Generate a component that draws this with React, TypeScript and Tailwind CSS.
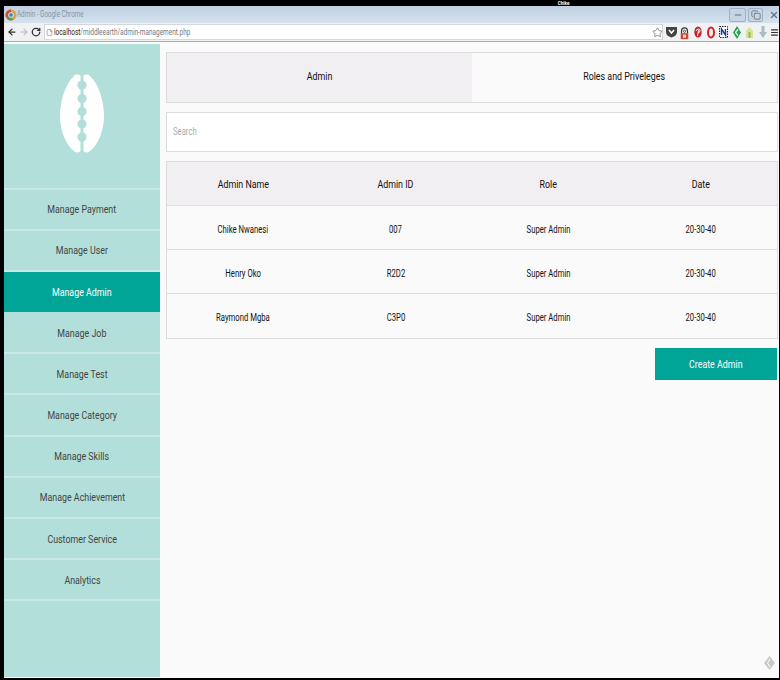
import React from 'react';
import { ArrowLeft, ArrowRight, RotateCw, Star, File, Minus, X, Copy, Menu } from 'lucide-react';

const navItems = [
    'Manage Payment',
    'Manage User',
    'Manage Admin',
    'Manage Job',
    'Manage Test',
    'Manage Category',
    'Manage Skills',
    'Manage Achievement',
    'Customer Service',
    'Analytics',
];

const admins = [
    { name: 'Chike Nwanesi', id: '007', role: 'Super Admin', date: '20-30-40' },
    { name: 'Henry Oko', id: 'R2D2', role: 'Super Admin', date: '20-30-40' },
    { name: 'Raymond Mgba', id: 'C3P0', role: 'Super Admin', date: '20-30-40' },
];

// The screenshot was squashed sideways, so the text is too
const Squeezed: React.FC<{ children: React.ReactNode }> = ({ children }) => (
    <span className="inline-block whitespace-nowrap scale-x-[0.77]">{children}</span>
);

// Shell logo from the sidebar
const Logo = () => (
    <svg width="44" height="80" viewBox="0 0 44 80">
        <path
            d="M22 3 C20 0 16 0 14 2 C5 10 0 28 0 42 C0 58 7 72 14 77 C17 79.500 20 79 22 75 C24 79 27 79.500 30 77 C37 72 44 58 44 42 C44 28 39 10 30 2 C28 0 24 0 22 3 Z"
            fill="#ffffff"
        />
        <path d="M22 0V78" stroke="#b2dfd9" strokeWidth="3" />
        <circle cx="22" cy="11" r="4.600" fill="#b2dfd9" />
        <circle cx="22" cy="24.500" r="4.600" fill="#b2dfd9" />
        <circle cx="22" cy="37.500" r="4.600" fill="#b2dfd9" />
        <circle cx="22" cy="50" r="4.600" fill="#b2dfd9" />
        <circle cx="22" cy="63" r="4.600" fill="#b2dfd9" />
    </svg>
);

const ChromeLogo = () => (
    <svg width="12" height="12" viewBox="0 0 12 12">
        <circle cx="6" cy="6" r="5.500" fill="#d9a441" />
        <path d="M6 .5A5.500 5.500 0 0 0 1.200 8.700L6 6Z" fill="#c9503c" />
        <path d="M1.200 8.700A5.500 5.500 0 0 0 8 11L6 6Z" fill="#5a9a58" />
        <circle cx="6" cy="6" r="2.400" fill="#4d7fb8" stroke="#e8eef4" />
    </svg>
);

const ExtensionIcons = () => (
    <div className="flex items-center">
        <div className="w-[13px] flex justify-center">
            <svg width="11" height="12" viewBox="0 0 11 12">
                <path d="M0 1h11v5q0 4-5.500 5.500Q0 10 0 6Z" fill="#444" />
                <path d="M3 4l2.500 3L8 4" fill="none" stroke="#fff" strokeWidth="1.500" />
            </svg>
        </div>
        <div className="w-[13px] flex justify-center">
            <svg width="9" height="17" viewBox="0 0 12 17" className="mt-[2px]">
                <path d="M2 8V5a4 4 0 0 1 8 0v3" fill="none" stroke="#333" strokeWidth="1.500" />
                <circle cx="6" cy="5.500" r="1.500" fill="none" stroke="#333" />
                <rect x="1" y="8" width="10" height="8" fill="#d3452f" />
                <rect x="4" y="10" width="4" height="4" fill="#f5d9d3" />
            </svg>
        </div>
        <div className="w-[13px] flex justify-center">
            <svg width="8" height="12" viewBox="0 0 8 12">
                <ellipse cx="4" cy="6" rx="3.700" ry="5.500" fill="#c9202c" />
                <path d="M3.500 10l1-6M2 5Q2.500 3 4.500 3T6 5 4 7" fill="none" stroke="#fff" />
            </svg>
        </div>
        <div className="w-[13px] flex justify-center">
            <svg width="8" height="13" viewBox="0 0 8 13">
                <ellipse cx="4" cy="6.500" rx="3" ry="5" fill="none" stroke="#d81f26" strokeWidth="2" />
            </svg>
        </div>
        <div className="w-[13px] flex justify-center">
            <svg width="9" height="13" viewBox="0 0 9 13">
                <rect x="0.500" y="0.500" width="8" height="11" fill="#fff" stroke="#222" strokeDasharray="1.500 1" />
                <path d="M2.500 9V3l4 6V3" fill="none" stroke="#1c3f94" strokeWidth="1.500" />
            </svg>
        </div>
        <div className="w-[13px] flex justify-center">
            <svg width="8" height="13" viewBox="0 0 8 13">
                <path d="M4 0L8 6.500 4 13 0 6.500Z" fill="#1da650" />
                <path d="M5 3.500L2.500 6.500 5 9.500" fill="none" stroke="#fff" strokeWidth="1.200" />
            </svg>
        </div>
        <div className="w-[13px] flex justify-center">
            <svg width="7" height="11" viewBox="0 0 7 11">
                <path d="M0 11V4l3.500-4L7 4v7Z" fill="#d6e58f" />
                <rect x="2.500" y="5" width="2" height="6" fill="#9ab855" />
            </svg>
        </div>
        <div className="w-[13px] flex justify-center">
            <svg width="8" height="12" viewBox="0 0 8 12">
                <path d="M2.500 0h3v6H8l-4 6-4-6h2.500Z" fill="#a9bcc8" />
            </svg>
        </div>
    </div>
);

const App: React.FC = () => {
    return (
        <div className="w-[780px] h-[680px] bg-black pl-[4px] pr-[1px] pb-[2px] flex flex-col overflow-hidden font-['Roboto',sans-serif]">
            <div className="h-[6px] shrink-0 pl-[552px] flex items-center text-[6px] leading-none font-bold text-white">
                <Squeezed>Chike</Squeezed>
            </div>
            <div className="relative h-[17px] shrink-0 bg-gradient-to-b from-[#bfd0e2] to-[#d5e2ee] flex items-center pl-[1px]">
                <ChromeLogo />
                <span className="text-[8.2px] text-[#8a949e] whitespace-nowrap origin-left scale-x-[0.77]">Admin - Google Chrome</span>
                <div className="absolute right-[0px] top-[2px] flex gap-[2px]">
                    <div className="w-[17px] h-[14px] rounded-[2px] border border-[#9fb2c6] bg-[#c6d5e4] flex items-center justify-center">
                        <Minus size={10} color="#66727f" strokeWidth={2.5} />
                    </div>
                    <div className="w-[15px] h-[14px] rounded-[2px] border border-[#9fb2c6] bg-[#c6d5e4] flex items-center justify-center">
                        <Copy size={10} color="#66727f" strokeWidth={2} />
                    </div>
                    <div className="ml-[4px] w-[10px] h-[14px] flex items-center justify-center">
                        <X size={10} color="#66727f" strokeWidth={3} />
                    </div>
                </div>
            </div>
            <div className="h-[19px] shrink-0 bg-[#f0f1f3] flex items-center border-b border-[#a8acb0]">
                <div className="w-[40px] flex items-center gap-[2px] pl-[3px]">
                    <ArrowLeft size={10} color="#333" strokeWidth={3} />
                    <ArrowRight size={10} color="#b5b8bb" strokeWidth={2.5} />
                    <RotateCw size={10} color="#333" strokeWidth={3} />
                </div>
                <div className="w-[620px] h-[16px] bg-white border border-[#d5d7da] flex items-center gap-[1px] pl-[1px] text-[8.4px]">
                    <File size={7} color="#777" />
                    <span className="whitespace-nowrap origin-left scale-x-[0.77]">
                        <span className="text-[#222]">localhost</span>
                        <span className="text-[#777]">/middleearth/admin-management.php</span>
                    </span>
                    <Star size={11} color="#888" className="ml-auto mr-[-1px]" />
                </div>
                <div className="ml-[2px]">
                    <ExtensionIcons />
                </div>
                <Menu size={9} color="#333" strokeWidth={3} className="ml-[1px]" />
            </div>
            <div className="h-[2px] shrink-0 bg-[#fafafa]" />
            <div className="flex-1 flex min-h-0 relative bg-[#fafafa]">
                <aside className="w-[156px] shrink-0 mb-[1px] bg-[#b2dfd9] flex flex-col">
                    <div className="h-[145.5px] shrink-0 border-b-2 border-[#c7e8e3] flex items-center justify-center pb-[3px]">
                        <Logo />
                    </div>
                    {navItems.map(item => (
                        <div
                            key={item}
                            className={
                                item === 'Manage Admin'
                                    ? 'h-[41.2px] shrink-0 pt-[1.3px] flex items-center justify-center bg-[#00a598] bg-clip-padding border-b border-[#b2dfd9] text-white text-[11.5px]'
                                    : 'h-[41.2px] shrink-0 pt-[1.3px] flex items-center justify-center border-b-2 border-[#c7e8e3] text-[#444] text-[11.5px]'
                            }
                        >
                            <Squeezed>{item}</Squeezed>
                        </div>
                    ))}
                </aside>
                <main className="flex-1 pl-[6px] pt-[8px] pr-[1px] flex flex-col">
                    <div className="h-[51px] shrink-0 flex border border-[#dcdcdc] text-[11.5px] text-[#111]">
                        <div className="w-[305px] bg-[#f1eff1] flex items-center justify-center pb-[2px]">
                            <Squeezed>Admin</Squeezed>
                        </div>
                        <div className="flex-1 flex items-center justify-center pb-[2px]">
                            <Squeezed>Roles and Priveleges</Squeezed>
                        </div>
                    </div>
                    <div className="mt-[9px] h-[40px] shrink-0 bg-white border border-[#dcdcdc] flex items-center pl-[6px] pb-[2px] text-[10px] text-[#aaa]">
                        <span className="whitespace-nowrap origin-left scale-x-[0.77]">Search</span>
                    </div>
                    <div className="mt-[9px] border border-[#dcdcdc]">
                        <div className="h-[44px] grid grid-cols-4 items-center text-center bg-[#f1eff1] border-b border-[#dcdcdc] pt-[2px] text-[11.5px] text-[#111]">
                            <div><Squeezed>Admin Name</Squeezed></div>
                            <div><Squeezed>Admin ID</Squeezed></div>
                            <div><Squeezed>Role</Squeezed></div>
                            <div><Squeezed>Date</Squeezed></div>
                        </div>
                        {admins.map((admin, index) => (
                            <div
                                key={admin.name}
                                className={
                                    index < admins.length - 1
                                        ? 'h-[44px] grid grid-cols-4 items-center text-center border-b border-[#dcdcdc] pt-[3px] text-[10px] text-[#111]'
                                        : 'h-[44px] grid grid-cols-4 items-center text-center pt-[2px] text-[10px] text-[#111]'
                                }
                            >
                                <div><Squeezed>{admin.name}</Squeezed></div>
                                <div><Squeezed>{admin.id}</Squeezed></div>
                                <div><Squeezed>{admin.role}</Squeezed></div>
                                <div><Squeezed>{admin.date}</Squeezed></div>
                            </div>
                        ))}
                    </div>
                    <div className="mt-[9px] mr-[1px] flex justify-end">
                        <button className="w-[122px] h-[32px] pt-[1px] bg-[#00a598] text-white text-[11.5px]">
                            <Squeezed>Create Admin</Squeezed>
                        </button>
                    </div>
                </main>
                <svg className="absolute right-[4px] bottom-[8px]" width="11" height="14" viewBox="0 0 11 14">
                    <path d="M5.500 0L11 7l-5.500 7L0 7Z" fill="#c9c9c9" />
                    <path d="M6 3L3.500 7 6 11" fill="none" stroke="#fff" />
                </svg>
            </div>
        </div>
    );
};

export default App;
